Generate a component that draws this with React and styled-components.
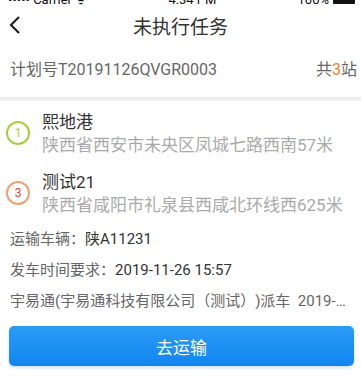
import styled, { createGlobalStyle } from 'styled-components';

const GlobalStyle = createGlobalStyle`
  html, body {
    margin: 0;
    padding: 0;
    background: #fff;
    font-family: Roboto, "Noto Sans CJK SC", sans-serif;
  }
`;

const Page = styled.div`
  width: 361px;
  height: 384px;
  overflow: hidden;
  background: #fff;
  display: flex;
  flex-direction: column;
`;

const StatusBar = styled.div`
  height: 18px;
  margin-top: -10px;
  padding: 0 6px 0 8px;
  display: flex;
  align-items: center;
  justify-content: space-between;
  font-size: 13px;
  color: #111;
`;

const Battery = styled.span`
  display: inline-block;
  width: 22px;
  height: 9px;
  margin-left: 4px;
  background: #111;
  border-radius: 1px;
`;

const NavBar = styled.div`
  height: 34px;
  display: flex;
  align-items: center;
  justify-content: center;
  position: relative;
`;

const Back = styled.svg`
  position: absolute;
  left: 8px;
  top: 7px;
`;

const Title = styled.h1`
  margin: 0;
  font-size: 19px;
  font-weight: 400;
  color: #333;
`;

const PlanRow = styled.div`
  height: 36px;
  margin-top: 8px;
  padding: 0 4px 0 10px;
  display: flex;
  align-items: center;
  justify-content: space-between;
  font-size: 16px;
  color: #666;
`;

const Accent = styled.span`
  color: #f5822a;
`;

const Divider = styled.div`
  height: 4px;
  margin-top: 11px;
  background: #eee;
`;

const Stations = styled.div`
  padding: 10px 0 0 6px;
  display: flex;
  flex-direction: column;
  gap: 14px;
`;

const Station = styled.div`
  display: flex;
  align-items: center;
  gap: 12px;
`;

const Badge = styled.div`
  width: 20px;
  height: 20px;
  border: 2px solid ${(p) => p.$color};
  border-radius: 50%;
  display: flex;
  align-items: center;
  justify-content: center;
  font-size: 12px;
  color: ${(p) => p.$text || p.$color};
  flex-shrink: 0;
  margin-bottom: 2px;
`;

const StationText = styled.div`
  display: flex;
  flex-direction: column;
  font-size: 17px;
  line-height: 23px;
`;

const Name = styled.div`
  color: #333;
`;

const Address = styled.div`
  color: #aaa;
`;

const Info = styled.div`
  margin-top: 13px;
  padding: 0 13px 0 10px;
  display: flex;
  flex-direction: column;
  gap: 13px;
`;

const InfoRow = styled.div`
  font-size: 15px;
  line-height: 18px;
  color: #666;
  white-space: nowrap;
  overflow: hidden;
  text-overflow: ellipsis;
  text-spacing-trim: space-all;
`;

const Value = styled.span`
  color: #333;
`;

const GoButton = styled.button`
  margin: 16px 7px 0 9px;
  height: 40px;
  border: none;
  border-radius: 5px;
  background: linear-gradient(#2b9cf5, #1185f2);
  box-shadow: 0 2px 3px rgba(30, 130, 200, 0.2);
  color: #fff;
  font-family: inherit;
  font-size: 17px;
`;

const stations = [
  { no: 1, name: '熙地港', address: '陕西省西安市未央区凤城七路西南57米', color: '#a6cf3c' },
  { no: 3, name: '测试21', address: '陕西省咸阳市礼泉县西咸北环线西625米', color: '#f0a070', text: '#e04545' },
];

const App = () => {
  return (
    <Page>
      <GlobalStyle />
      <StatusBar>
        <span>••••• Carrier ᯤ</span>
        <span>4:34 PM</span>
        <span>100%<Battery /></span>
      </StatusBar>
      <NavBar>
        <Back width="14" height="20" viewBox="0 0 14 20">
          <path d="M11 2 L3 10 L11 18" fill="none" stroke="#222" strokeWidth="2.2" />
        </Back>
        <Title>未执行任务</Title>
      </NavBar>
      <PlanRow>
        <span>计划号T20191126QVGR0003</span>
        <span>共<Accent>3</Accent>站</span>
      </PlanRow>
      <Divider />
      <Stations>
        {stations.map((s) => (
          <Station key={s.no}>
            <Badge $color={s.color} $text={s.text}>{s.no}</Badge>
            <StationText>
              <Name>{s.name}</Name>
              <Address>{s.address}</Address>
            </StationText>
          </Station>
        ))}
      </Stations>
      <Info>
        <InfoRow>运输车辆：<Value>陕A11231</Value></InfoRow>
        <InfoRow>发车时间要求：<Value>2019-11-26 15:57</Value></InfoRow>
        <InfoRow>宇易通(宇易通科技有限公司（测试）)派车&nbsp;&nbsp;2019-11-26 15:57</InfoRow>
      </Info>
      <GoButton>去运输</GoButton>
    </Page>
  );
};

export default App;
